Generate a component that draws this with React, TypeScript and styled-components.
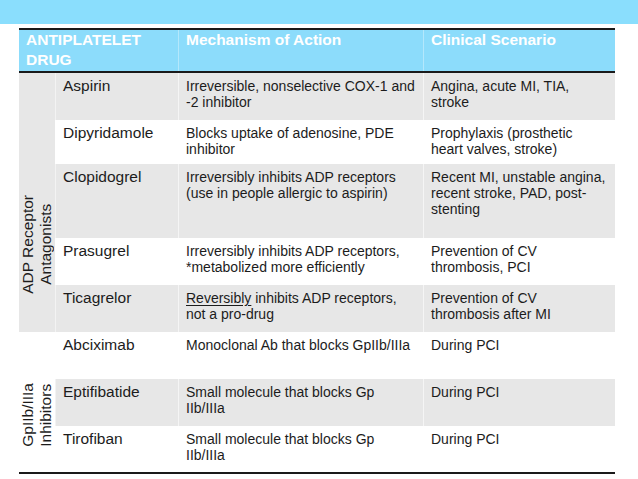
import React from 'react';
import styled, { createGlobalStyle } from 'styled-components';

type Drug = {
  name: string;
  mechanism: React.ReactNode;
  scenario: React.ReactNode;
  height: number;
};

const adpDrugs: Drug[] = [
  {
    name: 'Aspirin',
    mechanism: (
      <>
        Irreversible, nonselective COX-1 and
        <br />
        -2 inhibitor
      </>
    ),
    scenario: (
      <>
        Angina, acute MI, TIA,
        <br />
        stroke
      </>
    ),
    height: 47,
  },
  {
    name: 'Dipyridamole',
    mechanism: (
      <>
        Blocks uptake of adenosine, PDE
        <br />
        inhibitor
      </>
    ),
    scenario: (
      <>
        Prophylaxis (prosthetic
        <br />
        heart valves, stroke)
      </>
    ),
    height: 44,
  },
  {
    name: 'Clopidogrel',
    mechanism: (
      <>
        Irreversibly inhibits ADP receptors
        <br />
        (use in people allergic to aspirin)
      </>
    ),
    scenario: (
      <>
        Recent MI, unstable angina,
        <br />
        recent stroke, PAD, post-
        <br />
        stenting
      </>
    ),
    height: 74,
  },
  {
    name: 'Prasugrel',
    mechanism: (
      <>
        Irreversibly inhibits ADP receptors,
        <br />
        *metabolized more efficiently
      </>
    ),
    scenario: (
      <>
        Prevention of CV
        <br />
        thrombosis, PCI
      </>
    ),
    height: 47,
  },
  {
    name: 'Ticagrelor',
    mechanism: (
      <>
        <u>Reversibly</u> inhibits ADP receptors,
        <br />
        not a pro-drug
      </>
    ),
    scenario: (
      <>
        Prevention of CV
        <br />
        thrombosis after MI
      </>
    ),
    height: 47,
  },
];

const gpDrugs: Drug[] = [
  {
    name: 'Abciximab',
    mechanism: 'Monoclonal Ab that blocks GpIIb/IIIa',
    scenario: 'During PCI',
    height: 47,
  },
  {
    name: 'Eptifibatide',
    mechanism: (
      <>
        Small molecule that blocks Gp
        <br />
        IIb/IIIa
      </>
    ),
    scenario: 'During PCI',
    height: 47,
  },
  {
    name: 'Tirofiban',
    mechanism: (
      <>
        Small molecule that blocks Gp
        <br />
        IIb/IIIa
      </>
    ),
    scenario: 'During PCI',
    height: 46,
  },
];

const App = () => {
  return (
    <>
      <GlobalStyle />
      <Page>
        <TopBar />
        <Table>
          <HeaderRow>
            <HeaderCell>
              ANTIPLATELET
              <br />
              DRUG
            </HeaderCell>
            <HeaderCell $divider>Mechanism of Action</HeaderCell>
            <HeaderCell $divider>Clinical Scenario</HeaderCell>
          </HeaderRow>
          <Section>
            <GroupCell $shaded $bottom={38}>
              <GroupLabel>
                ADP Receptor
                <br />
                Antagonists
              </GroupLabel>
            </GroupCell>
            <Rows>
              {adpDrugs.map((d, i) => (
                <Row key={d.name} $shaded={i % 2 === 0} $height={d.height}>
                  <NameCell>{d.name}</NameCell>
                  <TextCell>{d.mechanism}</TextCell>
                  <TextCell>{d.scenario}</TextCell>
                </Row>
              ))}
            </Rows>
          </Section>
          <Section>
            <GroupCell $bottom={25}>
              <GroupLabel>
                GpIIb/IIIa
                <br />
                Inhibitors
              </GroupLabel>
            </GroupCell>
            <Rows>
              {gpDrugs.map((d, i) => (
                <Row key={d.name} $shaded={i % 2 === 1} $height={d.height}>
                  <NameCell>{d.name}</NameCell>
                  <TextCell>{d.mechanism}</TextCell>
                  <TextCell>{d.scenario}</TextCell>
                </Row>
              ))}
            </Rows>
          </Section>
        </Table>
      </Page>
    </>
  );
};

export default App;

const GlobalStyle = createGlobalStyle`
  html, body {
    margin: 0;
    padding: 0;
    background: #ffffff;
  }
  body {
    font-family: 'Liberation Sans', Arial, sans-serif;
    color: #1c1c1c;
  }
`;

const Page = styled.div`
  width: 638px;
  height: 479px;
  overflow: hidden;
  background: #ffffff;
`;

const TopBar = styled.div`
  height: 24px;
  background-color: #8adefd;
`;

const Table = styled.div`
  width: 596px;
  margin: 4px 0 0 19px;
  border-bottom: 2px solid #1a1a1a;
`;

const HeaderRow = styled.div`
  display: grid;
  grid-template-columns: 159px 245px 192px;
  height: 41px;
  background-color: #8cdcfb;
  border-top: 2px solid #1a1a1a;
  border-bottom: 2px solid #1a1a1a;
`;

const HeaderCell = styled.div<{ $divider?: boolean }>`
  padding: 0 7px;
  color: #ffffff;
  font-size: 15.5px;
  font-weight: 700;
  line-height: 20px;
  border-left: ${(p) => (p.$divider ? '1px solid rgba(255, 255, 255, 0.35)' : 'none')};
`;

const Section = styled.div`
  display: flex;
`;

const GroupCell = styled.div<{ $shaded?: boolean; $bottom: number }>`
  width: 36px;
  flex: none;
  display: flex;
  justify-content: center;
  align-items: flex-end;
  padding-bottom: ${(p) => p.$bottom}px;
  box-sizing: border-box;
  background-color: ${(p) => (p.$shaded ? '#e7e7e7' : '#ffffff')};
`;

const GroupLabel = styled.div`
  writing-mode: vertical-rl;
  transform: rotate(180deg);
  text-align: center;
  font-size: 15.5px;
  line-height: 18px;
  white-space: nowrap;
`;

const Rows = styled.div`
  display: flex;
  flex-direction: column;
`;

const Row = styled.div<{ $shaded: boolean; $height: number }>`
  display: grid;
  grid-template-columns: 123px 245px 192px;
  height: ${(p) => p.$height}px;
  background-color: ${(p) => (p.$shaded ? '#e7e7e7' : '#ffffff')};
`;

const NameCell = styled.div`
  padding: 4px 7px 0;
  font-size: 15.5px;
  line-height: 18px;
  white-space: nowrap;
  border-left: 1px solid rgba(255, 255, 255, 0.5);
`;

const TextCell = styled.div`
  padding: 5px 7px 0;
  font-size: 14px;
  line-height: 16px;
  white-space: nowrap;
  border-left: 1px solid rgba(255, 255, 255, 0.6);

  u {
    text-underline-offset: 2px;
  }
`;
